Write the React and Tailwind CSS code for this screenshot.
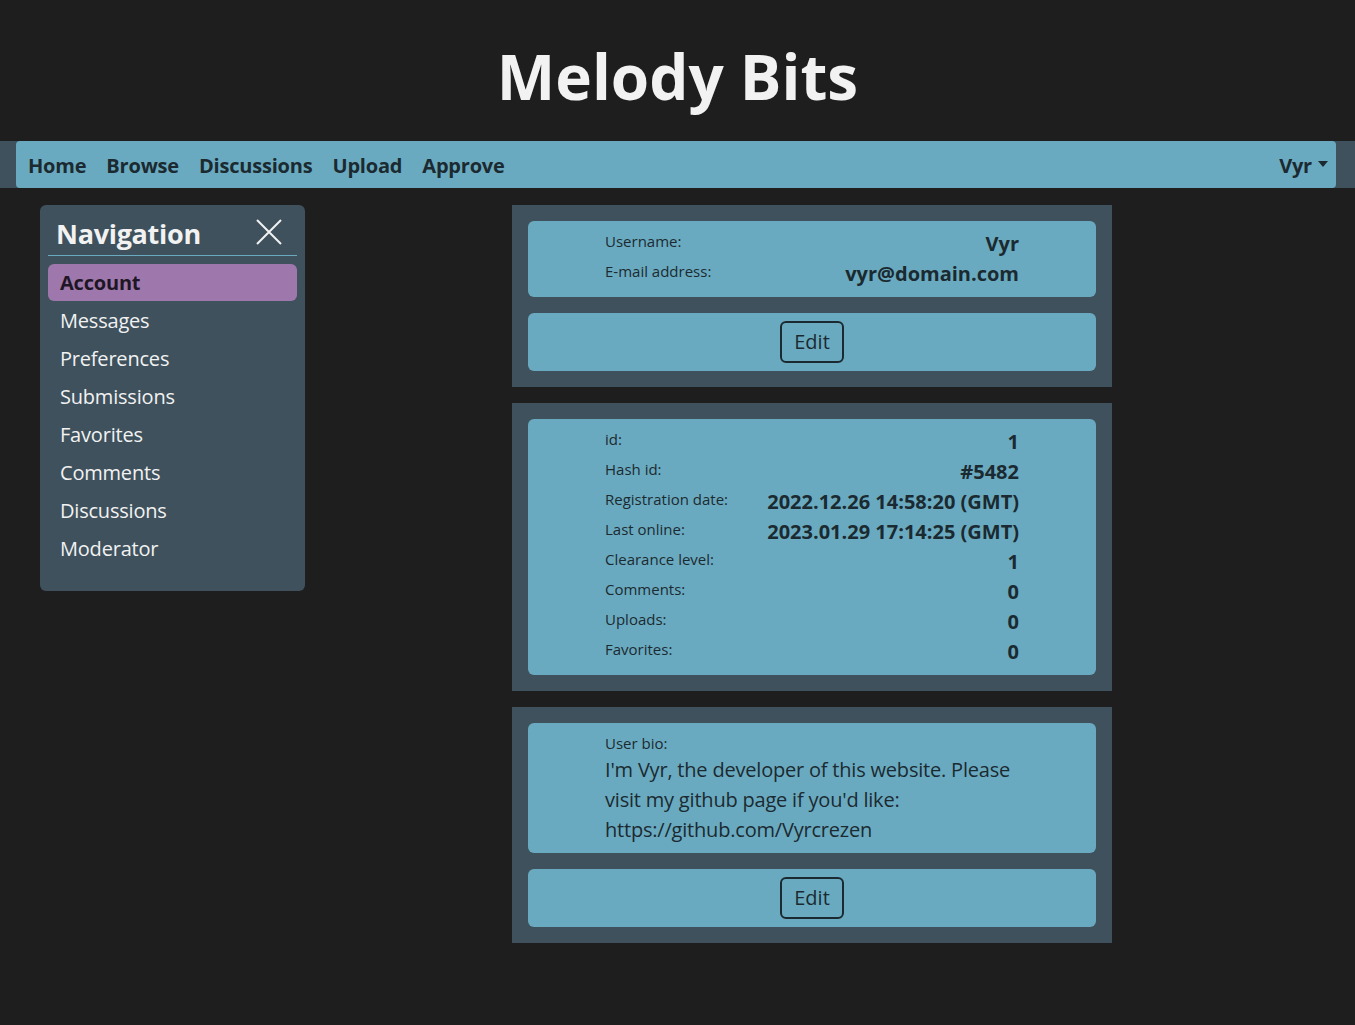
import { useState } from "react";

const font = { fontFamily: '"Open Sans", "Noto Sans", sans-serif' };

const navLinks = ["Home", "Browse", "Discussions", "Upload", "Approve"];

const sideLinks = [
  "Account",
  "Messages",
  "Preferences",
  "Submissions",
  "Favorites",
  "Comments",
  "Discussions",
  "Moderator",
];

const stats = [
  ["id:", "1"],
  ["Hash id:", "#5482"],
  ["Registration date:", "2022.12.26 14:58:20 (GMT)"],
  ["Last online:", "2023.01.29 17:14:25 (GMT)"],
  ["Clearance level:", "1"],
  ["Comments:", "0"],
  ["Uploads:", "0"],
  ["Favorites:", "0"],
];

const Row = ({ label, value }) => (
  <div className="flex items-start justify-between h-[30px]">
    <span className="text-[15px] leading-[24px]">{label}</span>
    <span className="text-[20px] leading-[30px] font-bold">{value}</span>
  </div>
);

const Card = ({ children, className = "" }) => (
  <div className={`bg-[#6aaac0] rounded-md ${className}`}>{children}</div>
);

const EditCard = () => (
  <Card className="flex justify-center py-2">
    <button className="border-2 border-[#1b2a31] rounded-md px-3 py-1 text-[20px] leading-[30px] text-[#1b2a31]">
      Edit
    </button>
  </Card>
);

export default function App() {
  const [active] = useState("Account");

  return (
    <div className="min-h-[1025px] bg-[#1e1e1e] text-[#1b2a31]" style={font}>
      {/* Header */}
      <div className="h-[141px] flex items-center justify-center pt-[10px]">
        <h1 className="text-[62px] font-bold text-[#f2f2f2] leading-none">Melody Bits</h1>
      </div>

      {/* Top bar */}
      <div className="bg-[#3e515c] pl-4 pr-[19px]">
        <div className="h-[47px] bg-[#6aaac0] rounded flex items-center justify-between pl-3 pr-2 pt-[2px]">
          <div className="flex items-center gap-[20px] tracking-[-0.2px]">
            {navLinks.map((l) => (
              <a key={l} className="text-[20px] font-bold cursor-pointer">
                {l}
              </a>
            ))}
          </div>
          <div className="flex items-center gap-[6px]">
            <span className="text-[20px] font-bold tracking-[-0.2px]">Vyr</span>
            <span className="w-0 h-0 border-l-[5px] border-r-[5px] border-t-[6px] border-l-transparent border-r-transparent border-t-[#1b2a31] mb-[4px]"></span>
          </div>
        </div>
      </div>

      <div className="flex items-start pl-10 pt-[17px]">
        {/* Sidebar */}
        <div className="w-[265px] bg-[#3e515c] rounded-md p-2 pb-[23px]">
          <div className="flex items-center justify-between h-[43px] border-b border-[#6aaac0] pl-2 pr-[15px]">
            <span className="text-[27px] font-bold text-[#f2f2f2] tracking-[-0.3px]">Navigation</span>
            <svg width="26" height="26" viewBox="0 0 26 26" className="mt-[-4px]">
              <path d="M1 1L25 25M25 1L1 25" stroke="#f2f2f2" strokeWidth="2" />
            </svg>
          </div>
          <div className="pt-2">
            {sideLinks.map((l) => (
              <div
                key={l}
                className={`h-[37px] mb-px flex items-center px-3 rounded-md text-[20px] tracking-[-0.2px] ${
                  l === active ? "bg-[#9e78ad] font-bold text-[#1e1624]" : "text-[#f2f2f2]"
                }`}
              >
                {l}
              </div>
            ))}
          </div>
        </div>

        {/* Main column */}
        <div className="ml-[207px] w-[600px] flex flex-col gap-4">
          <div className="bg-[#3e515c] p-4 flex flex-col gap-4">
            <Card className="py-2 px-[77px]">
              <Row label="Username:" value="Vyr" />
              <Row label="E-mail address:" value="vyr@domain.com" />
            </Card>
            <EditCard />
          </div>

          <div className="bg-[#3e515c] p-4">
            <Card className="py-2 px-[77px]">
              {stats.map(([l, v]) => (
                <Row key={l} label={l} value={v} />
              ))}
            </Card>
          </div>

          <div className="bg-[#3e515c] p-4 flex flex-col gap-4">
            <Card className="pt-2 pb-2 px-[77px]">
              <div className="text-[15px] leading-[24px]">User bio:</div>
              <p className="text-[20px] leading-[30px] tracking-[-0.2px] whitespace-nowrap">
                I'm Vyr, the developer of this website. Please
                <br />
                visit my github page if you'd like:
                <br />
                https://github.com/Vyrcrezen
              </p>
            </Card>
            <EditCard />
          </div>
        </div>
      </div>
    </div>
  );
}
